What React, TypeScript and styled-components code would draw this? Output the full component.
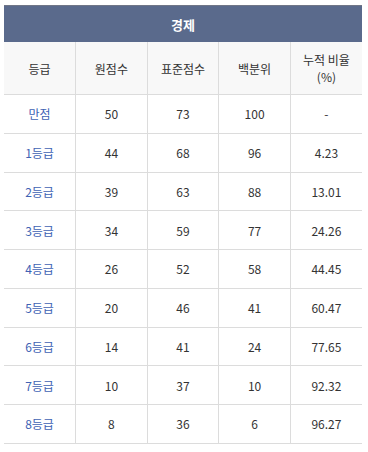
import { FC } from "react";
import styled, { createGlobalStyle } from "styled-components";

const Global = createGlobalStyle`
  html, body {
    margin: 0;
    padding: 0;
    background: #fff;
  }
  body {
    font-family: "Noto Sans CJK KR", "Noto Sans", sans-serif;
  }
`;

const Wrap = styled.div`
  padding: 5px 6px 0 4px;
`;

const Table = styled.table`
  width: 358px;
  border-collapse: collapse;
  table-layout: fixed;
  font-size: 12px;
  color: #333;
`;

const Title = styled.th`
  height: 36px;
  padding: 0;
  background: #5a6a8c;
  border-top: 1px solid #707687;
  color: #fff;
  font-size: 13px;
  font-weight: 700;
  text-align: center;
`;

const Head = styled.th`
  height: 52px;
  padding: 0;
  background: #f8f8f8;
  font-weight: 400;
  font-size: 12px;
  line-height: 17px;
  color: #333;
  text-align: center;
  border-bottom: 1px solid #dcdcdc;
  border-left: 1px solid #dcdcdc;

  &:first-child {
    border-left: none;
  }
`;

const Cell = styled.td<{ grade?: boolean }>`
  height: 37.75px;
  padding: 0;
  text-align: center;
  color: ${({ grade }) => (grade && "#4062b4") || "#333"};
  border-bottom: 1px solid #dcdcdc;
  border-left: 1px solid #dcdcdc;

  &:first-child {
    border-left: none;
  }
`;

const rows = [
  ["만점", "50", "73", "100", "-"],
  ["1등급", "44", "68", "96", "4.23"],
  ["2등급", "39", "63", "88", "13.01"],
  ["3등급", "34", "59", "77", "24.26"],
  ["4등급", "26", "52", "58", "44.45"],
  ["5등급", "20", "46", "41", "60.47"],
  ["6등급", "14", "41", "24", "77.65"],
  ["7등급", "10", "37", "10", "92.32"],
  ["8등급", "8", "36", "6", "96.27"],
];

const App: FC = () => (
  <Wrap>
    <Global />
    <Table>
      <thead>
        <tr>
          <Title colSpan={5}>경제</Title>
        </tr>
        <tr>
          <Head>등급</Head>
          <Head>원점수</Head>
          <Head>표준점수</Head>
          <Head>백분위</Head>
          <Head>
            누적 비율
            <br />
            (%)
          </Head>
        </tr>
      </thead>
      <tbody>
        {rows.map((row) => (
          <tr key={row[0]}>
            {row.map((value, i) => (
              <Cell key={i} grade={i === 0}>
                {value}
              </Cell>
            ))}
          </tr>
        ))}
      </tbody>
    </Table>
  </Wrap>
);

export default App;
